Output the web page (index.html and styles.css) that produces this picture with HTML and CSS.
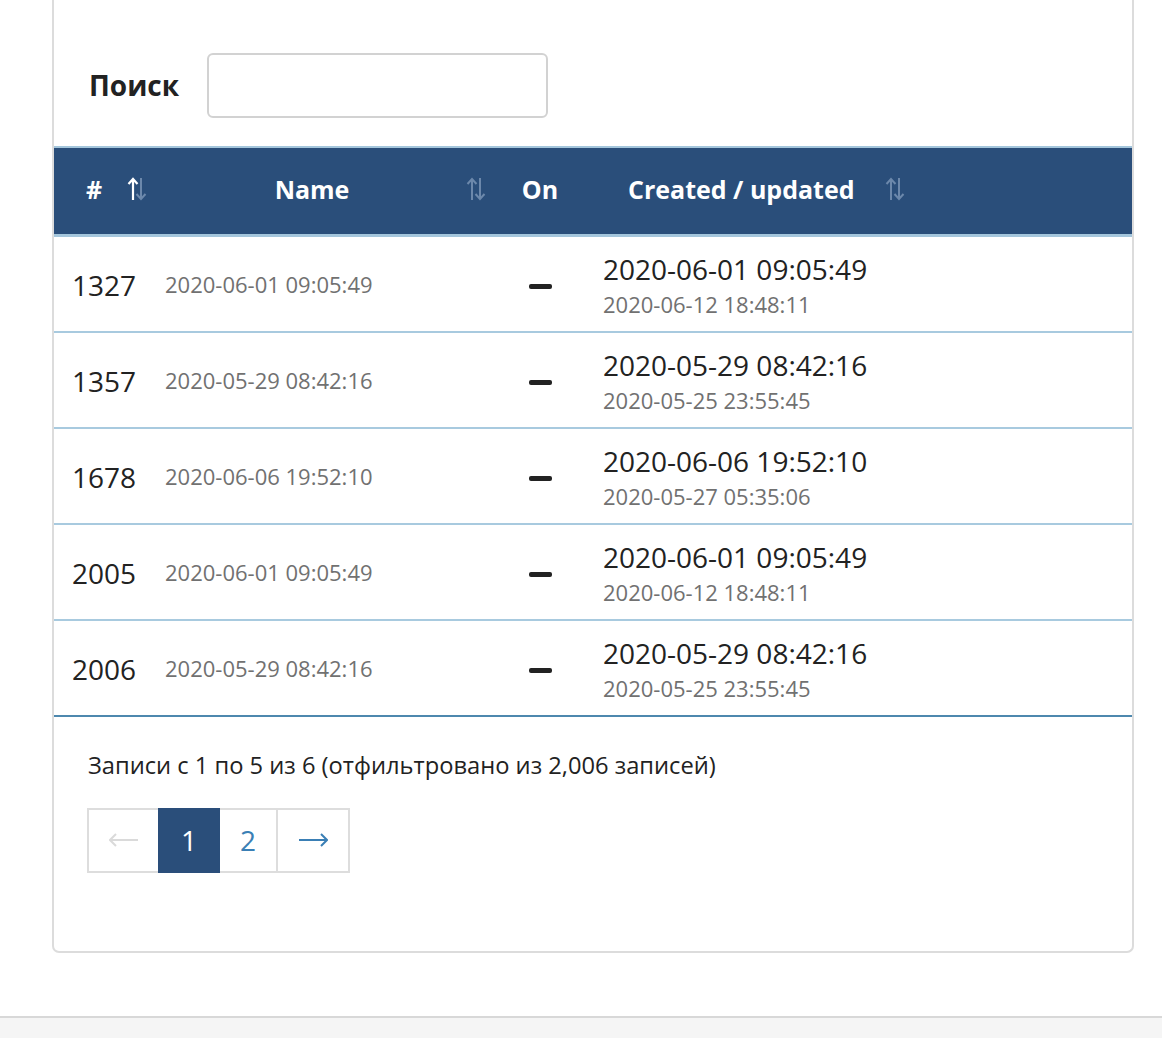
FILE: index.html
```html
<!DOCTYPE html>
<html lang="ru">
<head>
<meta charset="utf-8">
<link rel="stylesheet" href="styles.css">
</head>
<body>
<div class="page">
  <div class="card">
    <div class="search">
      <label class="search-label" for="q">Поиск</label>
      <input id="q" class="search-input" type="text">
    </div>
    <table class="grid">
      <colgroup>
        <col class="c1"><col class="c2"><col class="c3"><col class="c4"><col class="c5">
      </colgroup>
      <thead>
        <tr>
          <th class="h-id">#<span class="sort"><svg width="20" height="26" viewBox="0 0 20 26"><path d="M6 24V3M1.5 8L6 3l4.5 5" fill="none" stroke="#fff" stroke-width="2.2"/><path d="M14 2v21M9.5 18l4.5 5 4.5-5" fill="none" stroke="#6c88ab" stroke-width="2"/></svg></span></th>
          <th class="h-name">Name<span class="sort"><svg width="20" height="26" viewBox="0 0 20 26"><path d="M6 24V3M1.5 8L6 3l4.5 5" fill="none" stroke="#6c88ab" stroke-width="2"/><path d="M14 2v21M9.5 18l4.5 5 4.5-5" fill="none" stroke="#6c88ab" stroke-width="2"/></svg></span></th>
          <th class="h-on">On</th>
          <th class="h-created">Created / updated<span class="sort"><svg width="20" height="26" viewBox="0 0 20 26"><path d="M6 24V3M1.5 8L6 3l4.5 5" fill="none" stroke="#6c88ab" stroke-width="2"/><path d="M14 2v21M9.5 18l4.5 5 4.5-5" fill="none" stroke="#6c88ab" stroke-width="2"/></svg></span></th>
          <th class="h-empty"></th>
        </tr>
      </thead>
      <tbody>
        <tr><td class="id">1327</td><td class="name">2020-06-01 09:05:49</td><td class="on"><span class="dash"></span></td><td class="dates"><div class="created">2020-06-01 09:05:49</div><div class="updated">2020-06-12 18:48:11</div></td><td></td></tr>
        <tr><td class="id">1357</td><td class="name">2020-05-29 08:42:16</td><td class="on"><span class="dash"></span></td><td class="dates"><div class="created">2020-05-29 08:42:16</div><div class="updated">2020-05-25 23:55:45</div></td><td></td></tr>
        <tr><td class="id">1678</td><td class="name">2020-06-06 19:52:10</td><td class="on"><span class="dash"></span></td><td class="dates"><div class="created">2020-06-06 19:52:10</div><div class="updated">2020-05-27 05:35:06</div></td><td></td></tr>
        <tr><td class="id">2005</td><td class="name">2020-06-01 09:05:49</td><td class="on"><span class="dash"></span></td><td class="dates"><div class="created">2020-06-01 09:05:49</div><div class="updated">2020-06-12 18:48:11</div></td><td></td></tr>
        <tr class="last"><td class="id">2006</td><td class="name">2020-05-29 08:42:16</td><td class="on"><span class="dash"></span></td><td class="dates"><div class="created">2020-05-29 08:42:16</div><div class="updated">2020-05-25 23:55:45</div></td><td></td></tr>
      </tbody>
    </table>
    <div class="info">Записи с 1 по 5 из 6 (отфильтровано из 2,006 записей)</div>
    <ul class="pager">
      <li class="pg prev"><svg width="30" height="14" viewBox="0 0 30 14"><path d="M1 7h28M7 1L1 7l6 6" fill="none" stroke="currentColor" stroke-width="2"/></svg></li>
      <li class="pg active">1</li>
      <li class="pg num">2</li>
      <li class="pg next"><svg width="30" height="14" viewBox="0 0 30 14"><path d="M1 7h28M23 1l6 6-6 6" fill="none" stroke="currentColor" stroke-width="2"/></svg></li>
    </ul>
  </div>
</div>
<div class="footer"></div>
</body>
</html>
```

FILE: styles.css
```css
html, body {
  margin: 0;
  padding: 0;
  background: #fff;
  font-family: "Open Sans", "Liberation Sans", sans-serif;
  color: #222;
}
.page {
  height: 1016px;
  padding-left: 52px;
  box-sizing: border-box;
}
.card {
  width: 1082px;
  height: 953px;
  box-sizing: border-box;
  border: 2px solid #dcdcdc;
  border-top: none;
  border-radius: 0 0 7px 7px;
}
.search {
  display: flex;
  align-items: center;
  height: 146px;
  padding: 24px 0 0 35px;
  box-sizing: border-box;
}
.search-label {
  font-size: 28px;
  font-weight: 700;
  color: #222;
  margin-right: 28px;
}
.search-input {
  width: 341px;
  height: 65px;
  box-sizing: border-box;
  border: 2px solid #d2d2d2;
  border-radius: 6px;
  background: #fff;
  outline: none;
}
.grid {
  width: 1078px;
  border-collapse: collapse;
  table-layout: fixed;
}
.c1 { width: 101px; }
.c2 { width: 340px; }
.c3 { width: 90px; }
.c4 { width: 329px; }
.c5 { width: 218px; }
thead tr {
  background: #2a4e7a;
  border-top: 2px solid #a4c6dc;
  border-bottom: 3px solid #a4c6dc;
}
th {
  height: 82px;
  padding: 0 0 4px 0;
  color: #fff;
  font-size: 25px;
  font-weight: 700;
  position: relative;
  text-align: left;
}
.sort {
  position: absolute;
  top: 28px;
  line-height: 0;
}
.h-id { padding-left: 32px; }
.h-id .sort { left: 73px; }
.h-name { text-align: center; padding-right: 26px; }
.h-name .sort { right: 9px; }
.h-on { text-align: center; }
.h-created { padding-left: 43px; }
.h-created .sort { left: 300px; }
tbody tr {
  border-bottom: 2px solid #a8cadf;
}
tbody tr.last {
  border-bottom: 2px solid #4d88ae;
}
td {
  height: 96px;
  box-sizing: border-box;
  padding: 0;
  vertical-align: middle;
}
td.id {
  padding: 2px 0 0 18px;
  font-size: 28px;
  color: #222;
}
td.name {
  padding: 0 0 0 10px;
  font-size: 22px;
  color: #717171;
}
.on { text-align: center; }
.dash {
  display: inline-block;
  width: 23px;
  height: 5px;
  border-radius: 2px;
  background: #222;
  vertical-align: middle;
  margin-top: 2px;
}
td.dates { padding: 5px 0 0 18px; }
.created {
  font-size: 28px;
  line-height: 36px;
  color: #222;
}
.updated {
  font-size: 22px;
  line-height: 34px;
  color: #717171;
}
.info {
  font-size: 23.7px;
  color: #222;
  padding: 32px 0 0 34px;
  line-height: 32px;
}
.pager {
  list-style: none;
  display: flex;
  margin: 27px 0 0 33px;
  padding: 0;
}
.pg {
  height: 65px;
  box-sizing: border-box;
  border: 2px solid #dddddd;
  margin-left: -2px;
  display: flex;
  align-items: center;
  justify-content: center;
  font-size: 28px;
  color: #3a7fb5;
}
.pg:first-child { margin-left: 0; }
.prev { width: 73px; color: #dadada; }
.active {
  width: 62px;
  background: #2a4e7a;
  border-color: #2a4e7a;
  color: #fff;
  position: relative;
}
.num { width: 60px; }
.next { width: 74px; }
.footer {
  height: 22px;
  border-top: 2px solid #d8d8d8;
  background: #f5f5f5;
}
```
